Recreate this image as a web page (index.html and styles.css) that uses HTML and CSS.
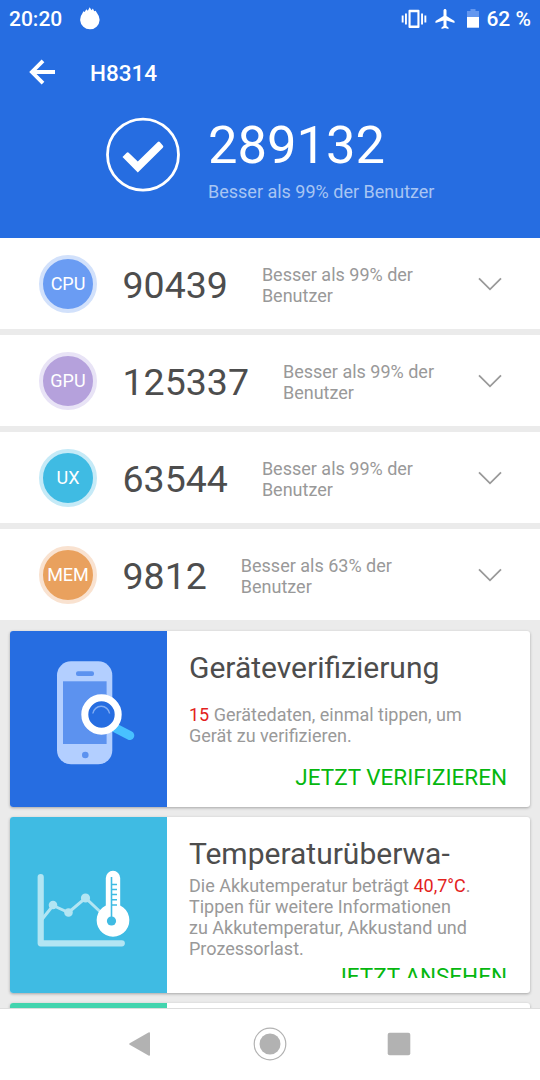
FILE: index.html
```html
<!DOCTYPE html>
<html lang="de">
<head>
<meta charset="utf-8">
<title>H8314</title>
<link rel="stylesheet" href="styles.css">
</head>
<body>
<div class="screen">
  <header class="header">
    <div class="statusbar">
      <span class="clock">20:20</span>
      <svg class="flame" width="20" height="24" viewBox="0 0 20 24"><path fill="#fff" d="M2.300 7.600 3.400 5.300 4.700 5.900 6.300 3.300 7.800 4.700 9.700 1.300 11.500 4.300 12.900 2.500 14.200 5.200 15.600 4.800 17.300 7.400 A9.700 9.700 0 1 1 2.300 7.600Z"/></svg>
      <span class="spacer"></span>
      <svg class="vibrate" width="26" height="20" viewBox="0 0 26 20"><g fill="#fff"><path fill-rule="evenodd" d="M8.500 .8h9a1 1 0 0 1 1 1v16.200a1 1 0 0 1-1 1h-9a1 1 0 0 1-1-1V1.800a1 1 0 0 1 1-1zM9.600 3.200v13.400h6.800V3.200z"/><path d="M.7 6.500h1.900v7H.7zM4 4.500h1.900v11H4zM20.100 4.500H22v11h-1.900zM23.400 6.500h1.900v7h-1.900z"/></g></svg>
      <svg class="plane" width="20" height="20" viewBox="2 2 19 20"><path fill="#fff" d="M21 16v-2l-8-5V3.500c0-.83-.67-1.500-1.500-1.500S10 2.670 10 3.500V9l-8 5v2l8-2.500V19l-2 1.500V22l3.500-1 3.500 1v-1.500L13 19v-5.500l8 2.500z"/></svg>
      <svg class="battery" width="12" height="20" viewBox="0 0 12 20"><path fill="#6497ef" d="M3.500 0h5v2H12v6H0V2h3.500z"/><path fill="#fff" d="M0 8h12v10.700H0z"/></svg>
      <span class="percent">62 %</span>
    </div>
    <div class="toolbar">
      <svg class="back" width="26" height="26" viewBox="0 0 26 26"><path d="M14 1.800 2.900 13 14 24.200M3 13h23" fill="none" stroke="#fff" stroke-width="3.800"/></svg>
      <span class="device">H8314</span>
    </div>
    <div class="summary">
      <svg width="76" height="76" viewBox="0 0 76 76"><circle cx="38" cy="37.700" r="35.500" fill="none" stroke="#fff" stroke-width="2.800"/><path d="M17.500 40 21.700 35.800Q22.700 34.800 23.700 35.800L32.800 44.500 52.800 25Q53.800 24 54.800 25L58 28.700Q58.800 29.700 57.800 30.700L32.800 55.500Z" fill="#fff"/></svg>
      <div class="total">
        <div class="total-score">289132</div>
        <div class="total-note">Besser als 99% der Benutzer</div>
      </div>
    </div>
  </header>

  <section class="scores">
    <div class="row"><span class="badge cpu">CPU</span><span class="score">90439</span><span class="note">Besser als 99% der Benutzer</span><svg class="chevron" width="24" height="14" viewBox="0 0 24 14"><path d="M1 1.300 12 12.300 23 1.300"/></svg></div>
    <div class="row"><span class="badge gpu">GPU</span><span class="score">125337</span><span class="note">Besser als 99% der Benutzer</span><svg class="chevron" width="24" height="14" viewBox="0 0 24 14"><path d="M1 1.300 12 12.300 23 1.300"/></svg></div>
    <div class="row"><span class="badge ux">UX</span><span class="score">63544</span><span class="note">Besser als 99% der Benutzer</span><svg class="chevron" width="24" height="14" viewBox="0 0 24 14"><path d="M1 1.300 12 12.300 23 1.300"/></svg></div>
    <div class="row"><span class="badge mem">MEM</span><span class="score">9812</span><span class="note">Besser als 63% der Benutzer</span><svg class="chevron" width="24" height="14" viewBox="0 0 24 14"><path d="M1 1.300 12 12.300 23 1.300"/></svg></div>
  </section>

  <section class="cards">
    <article class="card">
      <div class="art verify">
        <svg width="156" height="176" viewBox="0 0 156 176">
          <rect x="47" y="30.300" width="55.300" height="103" rx="14" fill="#b3cfff"/>
          <rect x="66" y="40.300" width="18" height="4.700" rx="2" fill="#5c92ef"/>
          <rect x="53" y="50.300" width="43.600" height="62.700" fill="#5c92ef"/>
          <circle cx="75.300" cy="124" r="3.300" fill="#5c92ef"/>
          <path d="M105.300 97 119.800 104.500" stroke="#48c1ff" stroke-width="9" stroke-linecap="round"/>
          <circle cx="91.500" cy="83.500" r="16.700" fill="#266de1" stroke="#fff" stroke-width="7"/>
          <path d="M82.800 82.500A8.500 8.500 0 0 1 99.600 82.500" fill="none" stroke="#82adf3" stroke-width="1.400"/>
        </svg>
      </div>
      <div class="content">
        <h2>Geräteverifizierung</h2>
        <p class="roomy"><em>15</em> Gerätedaten, einmal tippen, um<br>Gerät zu verifizieren.</p>
        <div class="action">JETZT VERIFIZIEREN</div>
      </div>
    </article>
    <article class="card">
      <div class="art temperature">
        <svg width="156" height="176" viewBox="0 0 156 176">
          <path d="M30.700 60v66.300H111.800" fill="none" stroke="#b2e5f3" stroke-width="6.200" stroke-linecap="round" stroke-linejoin="round"/>
          <path d="M31.500 103 43 88.500 58.500 95.500 75.500 81 91.500 96" fill="none" stroke="#b2e5f3" stroke-width="3"/>
          <g fill="#b2e5f3"><circle cx="43" cy="88" r="4.300"/><circle cx="58.500" cy="95.500" r="4.300"/><circle cx="75.500" cy="81" r="4.600"/></g>
          <path d="M95.800 61a7.200 7.200 0 0 1 14.400 0v27.500A16.400 16.400 0 1 1 95.800 88.500Z" fill="#fff"/>
          <path d="M101.500 60v44M101.500 67.500h5.500M101.500 72.500h5.500M101.500 77.500h5.500M101.500 82.700h5.500M101.500 88h5.500" fill="none" stroke="#3fbbe3" stroke-width="1.600"/>
          <circle cx="101.500" cy="104" r="4.600" fill="#3fbbe3"/>
        </svg>
      </div>
      <div class="content">
        <h2>Temperaturüberwa-</h2>
        <p>Die Akkutemperatur beträgt <em>40,7°C</em>.<br>Tippen für weitere Informationen<br>zu Akkutemperatur, Akkustand und<br>Prozessorlast.</p>
        <div class="action clipped">JETZT ANSEHEN</div>
      </div>
    </article>
    <article class="card"><div class="art next"></div></article>
  </section>

  <nav class="navbar">
    <svg width="24" height="26" viewBox="0 0 24 26"><path d="M1.700 12.200 20.500 1.400Q22 .7 22 2.300V23.700Q22 25.300 20.500 24.600L1.700 13.800Q.5 13 1.700 12.200Z" fill="#b2b2b2"/></svg>
    <svg width="34" height="34" viewBox="0 0 34 34"><circle cx="17" cy="17" r="15.800" fill="none" stroke="#b2b2b2" stroke-width="1.200"/><circle cx="17" cy="17" r="10.500" fill="#b2b2b2"/></svg>
    <svg width="24" height="24" viewBox="0 0 24 24"><rect x=".7" y=".7" width="22.600" height="22.600" rx="2" fill="#b2b2b2"/></svg>
  </nav>
</div>
</body>
</html>
```
FILE: styles.css
```css
* { box-sizing: border-box; }
body { margin: 0; font-family: Roboto, sans-serif; }
svg { display: block; flex: none; }
.screen { width: 540px; height: 1080px; overflow: hidden; display: flex; flex-direction: column; background: #ebebeb; }

.header { flex: none; height: 238px; background: #266de1; color: #fff; }
.statusbar { height: 37px; padding: 0 9px; display: flex; align-items: center; font-size: 21px; font-weight: 500; }
.clock { width: 71px; }
.flame { margin-bottom: 1px; }
.spacer { flex: 1; }
.vibrate { margin-right: 8px; }
.plane { margin-right: 12px; }
.battery { margin-right: 7px; }
.toolbar { height: 70px; padding-left: 29px; display: flex; align-items: center; }
.device { margin: 1px 0 0 35px; font-size: 22.5px; font-weight: 500; }
.summary { display: flex; padding: 10px 0 0 105px; }
.total { margin-left: 27px; }
.total-score { font-size: 52.5px; line-height: 62px; margin-top: -3px; }
.total-note { font-size: 18px; line-height: 21px; margin-top: 5px; color: #a8c5f3; }

.scores { flex: none; display: flex; flex-direction: column; gap: 6px; }
.row { height: 91px; padding: 0 38px 0 39px; display: flex; align-items: center; background: #fff; }
.badge { flex: none; width: 58px; height: 58px; border: 4px solid; border-radius: 50%; display: flex; align-items: center; justify-content: center; font-size: 18px; color: #fff; }
.cpu { background-color: #6a9cf3; border-color: #d2e1fb; }
.gpu { background-color: #b5a1dc; border-color: #e8e3f6; }
.ux { background-color: #3fbbe3; border-color: #c5eaf7; }
.mem { background-color: #e9a15e; border-color: #f9e2d0; }
.score { margin: 2px 34px 0 25.5px; font-size: 37.5px; color: #4d4d4d; }
.note { width: 170px; margin-top: 2px; font-size: 18px; line-height: 21px; color: #999; }
.chevron { margin-left: auto; }
.chevron path { fill: none; stroke: #999; stroke-width: 1.8; }

.cards { flex: 1; min-height: 0; overflow: hidden; display: flex; flex-direction: column; gap: 10.5px; padding: 11px 10.5px 0 10px; }
.card { flex: none; height: 175.5px; display: flex; background: #fff; border-radius: 3px; box-shadow: 0 1px 3px rgba(0,0,0,.3); overflow: hidden; }
.art { flex: none; width: 156.5px; }
.verify { background: #266de1; }
.temperature { background: #3fbbe3; }
.next { background: #43d4ae; }
.content { flex: 1; padding: 19px 22.5px 0; display: flex; flex-direction: column; }
h2 { margin: 0; font-size: 30px; line-height: 36px; font-weight: 400; letter-spacing: 0; color: #4d4d4d; }
p { margin: 3px 0 0; font-size: 18px; line-height: 21px; color: #999; white-space: nowrap; }
p.roomy { margin-top: 18px; }
em { font-style: normal; color: #e3221c; }
.action { align-self: flex-end; margin-top: 18px; font-size: 22.5px; line-height: 26px; color: #06b70f; white-space: nowrap; }
.clipped { height: 14.5px; margin-top: 4px; overflow: hidden; }

.navbar { flex: none; height: 72px; border-top: 1px solid #ddd; background: #fff; display: flex; align-items: center; justify-content: space-between; padding: 0 129px 2px 128px; }
```
